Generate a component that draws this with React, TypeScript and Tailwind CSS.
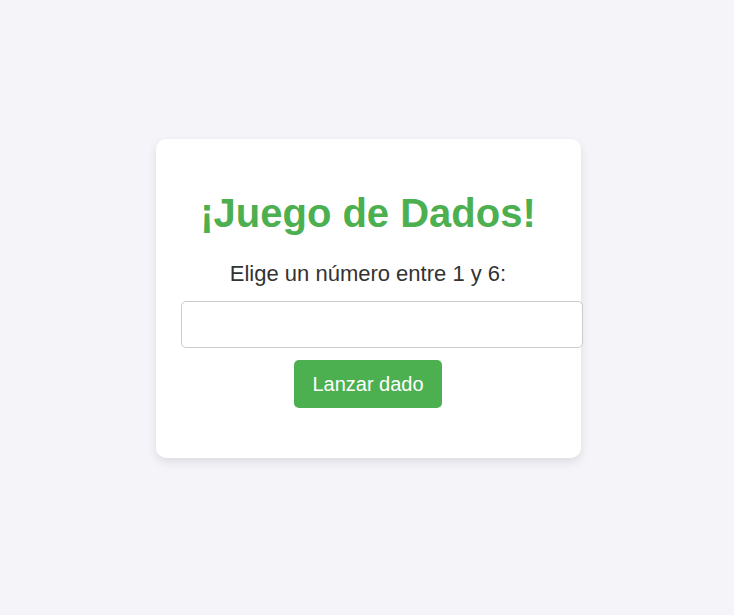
export default function App() {
  return (
    <div
      className="min-h-screen bg-[#f4f4f9] flex justify-center pt-[139px] pl-[3px]"
      style={{ fontFamily: '"Liberation Sans", Arial, sans-serif' }}
    >
      <div className="w-[425px] h-[319px] bg-white rounded-[10px] shadow-[0_4px_10px_rgba(0,0,0,0.1)] pl-[25px] pr-[26px] pt-[51px] text-center">
        <h1 className="text-[40px] leading-[46px] font-bold text-[#4caf50]">
          ¡Juego de Dados!
        </h1>
        <p className="mt-[25px] text-[22px] leading-[25px] text-[#333]">
          Elige un número entre 1 y 6:
        </p>
        <input
          type="number"
          className="block mt-[15px] w-[402px] h-[47px] border border-[#ccc] rounded-[5px] bg-white outline-none"
        />
        <button className="mt-[12px] w-[148px] h-[48px] bg-[#4caf50] text-white text-[20px] rounded-[5px]">
          Lanzar dado
        </button>
      </div>
    </div>
  )
}
